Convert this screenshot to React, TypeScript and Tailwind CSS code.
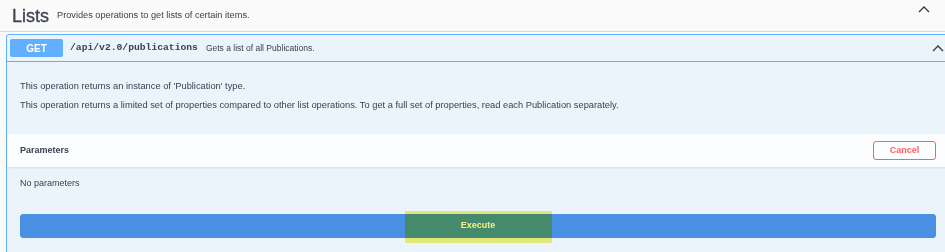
import React from "react";

const sans = { fontFamily: '"Liberation Sans", Arial, sans-serif' };

const Chevron: React.FC<{ className?: string }> = ({ className }) => (
  <svg className={className} width="12" height="7" viewBox="0 0 12 7" fill="none">
    <polyline points="1,6 6,1 11,6" stroke="#3b3b3b" strokeWidth="1.3" />
  </svg>
);

const App: React.FC = () => {
  return (
    <div className="relative h-[252px] w-[945px] overflow-hidden bg-[#fafafa] text-[#3b4151]" style={sans}>
      {/* tag header */}
      <div className="flex h-[32px] items-center border-b border-[#d8d8d8] pl-[12px] pr-[15px]">
        <span className="text-[18px] leading-none [-webkit-text-stroke:0.3px_#3b4151]">Lists</span>
        <span className="ml-[8px] mt-[1px] text-[9.2px]">Provides operations to get lists of certain items.</span>
        <Chevron className="ml-auto mb-[12px]" />
      </div>

      {/* operation */}
      <div className="ml-[6px] mt-[2px] w-[944px] rounded-tl-[3px] border border-[#61affe] bg-[#ebf3fb]">
        <div className="flex h-[27px] items-center border-b border-[#61affe] pl-[3px] pr-[5px]">
          <span className="flex h-[18px] w-[53px] items-center justify-center rounded-[2px] bg-[#61affe] text-[10px] font-bold text-white">
            GET
          </span>
          <span
            className="ml-[7px] text-[9.7px] font-bold text-[#3b4151]"
            style={{ fontFamily: '"Liberation Mono", "Courier New", monospace' }}
          >
            /api/v2.0/publications
          </span>
          <span className="ml-[8px] text-[8.5px]">Gets a list of all Publications.</span>
          <Chevron className="ml-auto" />
        </div>

        <div className="px-[13px] pt-[15px] pb-[19px] text-[9.3px] leading-[19px]">
          <p>This operation returns an instance of 'Publication' type.</p>
          <p>
            This operation returns a limited set of properties compared to other list operations. To get a full set of
            properties, read each Publication separately.
          </p>
        </div>

        <div className="flex h-[33px] items-center bg-white/80 px-[13px] shadow-[0_1px_2px_rgba(0,0,0,0.1)]">
          <span className="text-[9px] font-bold">Parameters</span>
          <button className="ml-auto flex h-[19px] w-[63px] items-center justify-center rounded-[3px] border-[1.5px] border-[#ff6060] text-[9px] font-bold text-[#ff6060]">
            Cancel
          </button>
        </div>

        <div className="px-[13px] pt-[10px] text-[9px]">No parameters</div>

        <div className="px-[13px] pt-[23px] pb-[20px]">
          <button className="flex h-[24px] w-full items-center justify-center rounded-[3px] border border-[#4990e2] bg-[#4990e2] text-[9px] font-bold text-white">
            Execute
          </button>
        </div>
      </div>

      {/* screenshot highlight */}
      <div className="absolute left-[405px] top-[211px] h-[32px] w-[147px] bg-[#f4f47c] mix-blend-multiply" />
    </div>
  );
};

export default App;
